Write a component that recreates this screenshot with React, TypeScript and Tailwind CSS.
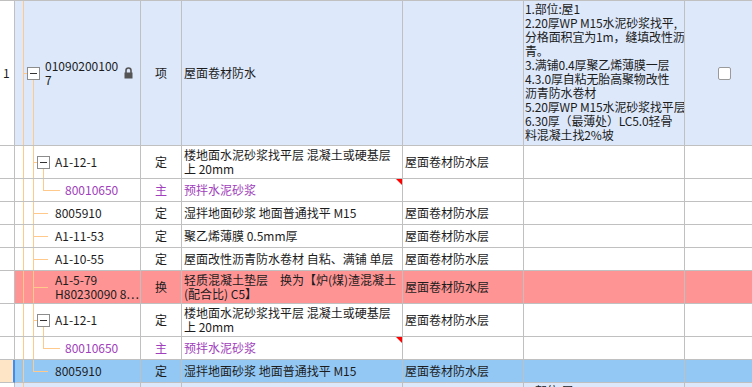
import React from "react";

type Variant = "root" | "parent" | "childC" | "leafB" | "leafBLast";

const LINE = "bg-[#ffc98c]";

function Lock() {
  return (
    <svg width="9" height="12" viewBox="0 0 9 12" className="shrink-0">
      <path d="M2 6 V3.5 A2.5 2.5 0 0 1 7 3.5 V6" fill="none" stroke="#555" strokeWidth="1.6" />
      <rect x="0.5" y="5.5" width="8" height="6" fill="#555" />
    </svg>
  );
}

function Box() {
  return (
    <div className="relative z-10 w-[13px] h-[13px] shrink-0 border border-[#8c8c8c] bg-white flex items-center justify-center">
      <div className="w-[7px] h-px bg-[#333]" />
    </div>
  );
}

function TreeCell({
  variant,
  lines,
  purple,
  lock,
}: {
  variant: Variant;
  lines: string[];
  purple?: boolean;
  lock?: boolean;
}) {
  const text = (
    <div className={`leading-[14px] whitespace-pre ${purple ? "text-[#a040bc]" : "text-[#1c1c1c]"}`}>
      {lines.map((l, i) => (
        <div key={i}>{l}</div>
      ))}
    </div>
  );
  return (
    <div className="relative flex items-center overflow-hidden border-r border-b border-[#c0c0c0]">
      <div className={`absolute left-[8px] top-0 bottom-0 w-px ${LINE}`} />
      {variant === "root" && (
        <>
          <div className={`absolute left-[8px] top-1/2 w-[4px] h-px ${LINE}`} />
          <div className={`absolute left-[18px] top-1/2 bottom-0 w-px ${LINE}`} />
        </>
      )}
      {(variant === "parent" || variant === "childC" || variant === "leafB") && (
        <div className={`absolute left-[18px] top-0 bottom-0 w-px ${LINE}`} />
      )}
      {variant === "leafBLast" && <div className={`absolute left-[18px] top-0 h-1/2 w-px ${LINE}`} />}
      {variant === "parent" && (
        <>
          <div className={`absolute left-[18px] top-1/2 w-[4px] h-px ${LINE}`} />
          <div className={`absolute left-[28px] top-1/2 bottom-0 w-px ${LINE}`} />
        </>
      )}
      {variant === "childC" && (
        <>
          <div className={`absolute left-[28px] top-0 h-1/2 w-px ${LINE}`} />
          <div className={`absolute left-[28px] top-1/2 w-[17px] h-px ${LINE}`} />
        </>
      )}
      {(variant === "leafB" || variant === "leafBLast") && (
        <div className={`absolute left-[18px] top-1/2 w-[15px] h-px ${LINE}`} />
      )}
      {variant === "root" && (
        <div className="flex items-center w-full pl-[12px]">
          <Box />
          <div className="ml-[5px]">{text}</div>
          <div className="flex-1" />
          {lock && (
            <div className="mr-[7px]">
              <Lock />
            </div>
          )}
        </div>
      )}
      {variant === "parent" && (
        <div className="flex items-center pl-[22px]">
          <Box />
          <div className="ml-[5px]">{text}</div>
        </div>
      )}
      {variant === "childC" && <div className="pl-[50px]">{text}</div>}
      {(variant === "leafB" || variant === "leafBLast") && <div className="pl-[40px]">{text}</div>}
    </div>
  );
}

type Row = {
  h: string;
  bg: string;
  col0: string;
  col0Border?: string;
  num?: string;
  variant: Variant;
  code: string[];
  lock?: boolean;
  type: string;
  purple?: boolean;
  desc: string[];
  mark?: boolean;
  unit?: string;
  spec?: string[];
  check?: boolean;
};

const SPEC = [
  "1.部位:屋1",
  "2.20厚WP M15水泥砂浆找平,",
  "分格面积宜为1m，缝填改性沥",
  "青。",
  "3.满铺0.4厚聚乙烯薄膜一层",
  "4.3.0厚自粘无胎高聚物改性",
  "沥青防水卷材",
  "5.20厚WP M15水泥砂浆找平层",
  "6.30厚（最薄处）LC5.0轻骨",
  "料混凝土找2%坡",
];

const UNIT = "屋面卷材防水层";

const rows: Row[] = [
  {
    h: "h-[145px]",
    bg: "bg-[#dde9fb]",
    col0: "bg-white",
    num: "1",
    variant: "root",
    code: ["01090200100", "7"],
    lock: true,
    type: "项",
    desc: ["屋面卷材防水"],
    spec: SPEC,
    check: true,
  },
  {
    h: "h-[33px]",
    bg: "bg-white",
    col0: "bg-white",
    variant: "parent",
    code: ["A1-12-1"],
    type: "定",
    desc: ["楼地面水泥砂浆找平层 混凝土或硬基层", "上 20mm"],
    unit: UNIT,
  },
  {
    h: "h-[23px]",
    bg: "bg-white",
    col0: "bg-white",
    variant: "childC",
    code: ["80010650"],
    type: "主",
    purple: true,
    desc: ["预拌水泥砂浆"],
    mark: true,
  },
  {
    h: "h-[23px]",
    bg: "bg-white",
    col0: "bg-white",
    variant: "leafB",
    code: ["8005910"],
    type: "定",
    desc: ["湿拌地面砂浆 地面普通找平 M15"],
    unit: UNIT,
  },
  {
    h: "h-[23px]",
    bg: "bg-white",
    col0: "bg-white",
    variant: "leafB",
    code: ["A1-11-53"],
    type: "定",
    desc: ["聚乙烯薄膜 0.5mm厚"],
    unit: UNIT,
  },
  {
    h: "h-[23px]",
    bg: "bg-white",
    col0: "bg-white",
    variant: "leafB",
    code: ["A1-10-55"],
    type: "定",
    desc: ["屋面改性沥青防水卷材 自粘、满铺 单层"],
    unit: UNIT,
  },
  {
    h: "h-[33px]",
    bg: "bg-[#ff9494]",
    col0: "bg-white",
    variant: "leafB",
    code: ["A1-5-79", "H80230090 8⋯"],
    type: "换",
    desc: ["轻质混凝土垫层　换为【炉(煤)渣混凝土", "(配合比) C5】"],
    unit: UNIT,
  },
  {
    h: "h-[33px]",
    bg: "bg-white",
    col0: "bg-white",
    variant: "parent",
    code: ["A1-12-1"],
    type: "定",
    desc: ["楼地面水泥砂浆找平层 混凝土或硬基层", "上 20mm"],
    unit: UNIT,
  },
  {
    h: "h-[23px]",
    bg: "bg-white",
    col0: "bg-white",
    variant: "childC",
    code: ["80010650"],
    type: "主",
    purple: true,
    desc: ["预拌水泥砂浆"],
    mark: true,
  },
  {
    h: "h-[23px]",
    bg: "bg-[#94c8f4]",
    col0: "bg-[#fde5c6]",
    col0Border: "border-r-2 border-r-[#3d8df5]",
    variant: "leafBLast",
    code: ["8005910"],
    type: "定",
    desc: ["湿拌地面砂浆 地面普通找平 M15"],
    unit: UNIT,
  },
  {
    h: "h-[145px]",
    bg: "bg-[#dde9fb]",
    col0: "bg-white",
    num: "2",
    variant: "root",
    code: ["01090200100", "8"],
    lock: true,
    type: "项",
    desc: ["屋面卷材防水"],
    spec: SPEC,
    check: true,
  },
];

function RowView({ r }: { r: Row }) {
  const cell = "border-r border-b border-[#c0c0c0]";
  const textColor = r.purple ? "text-[#a040bc]" : "text-[#1c1c1c]";
  return (
    <div className={`grid grid-cols-[15px_126px_41px_221px_121px_161px_1fr] shrink-0 ${r.h} ${r.bg}`}>
      <div
        className={`${r.col0} border-b border-[#c0c0c0] ${
          r.col0Border ? r.col0Border : "border-r"
        } flex items-center pl-[3px] text-[#1c1c1c]`}
      >
        {r.num}
      </div>
      <TreeCell variant={r.variant} lines={r.code} purple={r.purple} lock={r.lock} />
      <div className={`${cell} flex items-center justify-center ${textColor}`}>{r.type}</div>
      <div className={`${cell} relative flex items-center pl-[2px] overflow-hidden ${textColor}`}>
        <div className="leading-[14px] whitespace-pre">
          {r.desc.map((d, i) => (
            <div key={i}>{d}</div>
          ))}
        </div>
        {r.mark && (
          <div className="absolute right-0 top-0 w-0 h-0 border-t-[6px] border-t-[#ff0000] border-l-[6px] border-l-transparent" />
        )}
      </div>
      <div className={`${cell} flex items-center pl-[2px] text-[#1c1c1c] whitespace-nowrap overflow-hidden`}>{r.unit}</div>
      <div className={`${cell} pl-[1px] pt-[1px] text-[#1c1c1c] overflow-hidden`}>
        {r.spec && (
          <div className="leading-[14px] whitespace-pre tracking-[-0.15px]">
            {r.spec.map((s, i) => (
              <div key={i}>{s}</div>
            ))}
          </div>
        )}
      </div>
      <div className={`border-b border-[#c0c0c0] flex items-center pl-[33px]`}>
        {r.check && <div className="w-[13px] h-[13px] bg-white border border-[#9a9a9a] rounded-[2px]" />}
      </div>
    </div>
  );
}

export default function App() {
  return (
    <div className="w-[752px] h-[387px] overflow-hidden bg-white font-['Noto_Sans_CJK_SC',sans-serif] text-[12px]">
      <div className="flex flex-col border-t border-[#c0c0c0]">
        {rows.map((r, i) => (
          <RowView key={i} r={r} />
        ))}
      </div>
    </div>
  );
}
